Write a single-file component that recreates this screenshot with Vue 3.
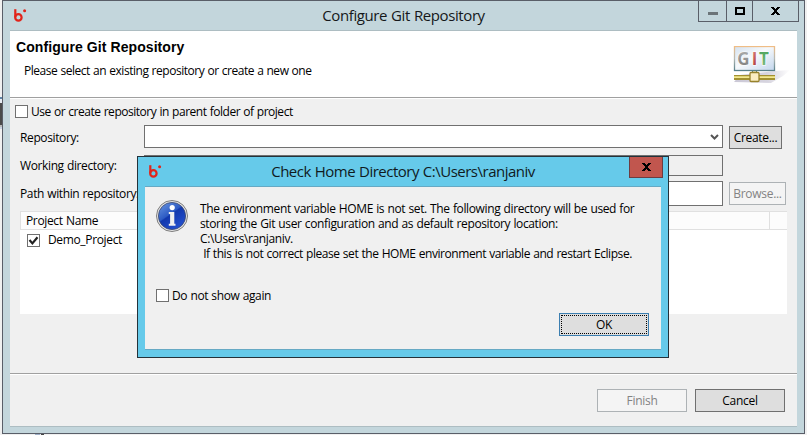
<script setup>
import { ref } from 'vue'

const useParent = ref(false)
const hideNotice = ref(false)
const projects = ref([{ name: 'Demo_Project', checked: true }])
const message = [
  'The environment variable HOME is not set. The following directory will be used for',
  'storing the Git user configuration and as default repository location:',
  'C:\\Users\\ranjaniv.\n',
].join('\n')
const advice = ' If this is not correct please set the HOME environment variable and restart Eclipse.'
</script>

<template>
  <div class="desktop">
    <span class="edge-mark"></span>
    <span class="bottom-mark"></span>
    <section class="window">
      <header class="titlebar">
        <svg class="logo" viewBox="0 0 14 14">
          <path d="M2.3 .2V8.3" />
          <circle cx="5.4" cy="8.4" r="3.2" />
          <circle class="dot" cx="11.6" cy="1.7" r="1.5" />
        </svg>
        <h1>Configure Git Repository</h1>
        <div class="controls">
          <span class="control min"><i></i></span>
          <span class="control max"><i></i></span>
          <span class="control close">
            <svg viewBox="0 0 9 8" shape-rendering="crispEdges"><path d="M0 0h3v1h1v1h1v-1h1v-1h3v1h-1v1h-1v1h-1v2h1v1h1v1h1v1h-3v-1h-1v-1h-1v1h-1v1h-3v-1h1v-1h1v-1h1v-2h-1v-1h-1v-1h-1z" /></svg>
          </span>
        </div>
      </header>

      <div class="client">
        <div class="banner">
          <div>
            <h2>Configure Git Repository</h2>
            <p class="subtitle">Please select an existing repository or create a new one</p>
          </div>
          <svg class="git" viewBox="0 0 60 40">
            <defs>
              <linearGradient id="screen" x1="0" y1="0" x2="1" y2="1">
                <stop offset="0" stop-color="#d5e2f0" />
                <stop offset=".45" stop-color="#f6f9fc" />
                <stop offset="1" stop-color="#c3d6ec" />
              </linearGradient>
              <linearGradient id="frame" x1="0" y1="0" x2="0" y2="1">
                <stop offset="0" stop-color="#f0bd85" />
                <stop offset=".5" stop-color="#b5b9b4" />
                <stop offset="1" stop-color="#58808a" />
              </linearGradient>
              <linearGradient id="shadow">
                <stop offset="0" stop-color="#b9b5c8" />
                <stop offset=".6" stop-color="#c9c6d4" />
                <stop offset="1" stop-color="#fff" />
              </linearGradient>
              <linearGradient id="letterG" x1="0" y1="0" x2="0" y2="1">
                <stop offset="0" stop-color="#b4b4b4" /><stop offset="1" stop-color="#777" />
              </linearGradient>
              <linearGradient id="letterI" x1="0" y1="0" x2="0" y2="1">
                <stop offset="0" stop-color="#d98380" /><stop offset="1" stop-color="#ac3434" />
              </linearGradient>
              <linearGradient id="letterT" x1="0" y1="0" x2="0" y2="1">
                <stop offset="0" stop-color="#45a055" /><stop offset="1" stop-color="#8cc18a" />
              </linearGradient>
            </defs>
            <path d="M2 36L8 29L43 25L58 24L51 30L39 37Z" fill="url(#shadow)" opacity=".75" />
            <rect x="2.5" y=".5" width="40" height="24" fill="url(#screen)" stroke="url(#frame)" stroke-width="1.3" />
            <g class="letters">
              <text x="5.2" y="19.3" fill="url(#letterG)">G</text>
              <text x="19.8" y="19.3" fill="url(#letterI)">I</text>
              <text x="27" y="19.3" fill="url(#letterT)">T</text>
            </g>
            <path d="M20.5 25v3h4v-3" fill="#d9d9b4" stroke="#5f8080" />
            <path d="M2 29h41v5H2z" fill="#a39131" />
            <path d="M2 30.2h41v1.8H2z" fill="#f3e98e" />
            <rect x="18" y="26.5" width="9" height="9" rx="1" fill="#faedc2" stroke="#97822b" stroke-width="1.3" />
          </svg>
        </div>

        <div class="parent-row">
          <span class="checkbox" role="checkbox" :aria-checked="useParent" @click="useParent = !useParent"></span>
          <span class="parent-label">Use or create repository in parent folder of project</span>
        </div>

        <div class="form">
          <label class="name-repo">Repository:</label>
          <div class="field combo">
            <svg viewBox="0 0 9 7"><path d="M1 1L4.5 4.5L8 1" /></svg>
          </div>
          <button class="button create">Create...</button>

          <label class="name-dir">Working directory:</label>
          <div class="field readonly"></div>
          <span></span>

          <label class="name-path">Path within repository:</label>
          <div class="field path"></div>
          <button class="button browse" disabled>Browse...</button>
        </div>

        <div class="table">
          <div class="head"><span class="column">Project Name</span></div>
          <div v-for="project in projects" :key="project.name" class="project">
            <span class="checkbox"><svg v-if="project.checked" viewBox="0 0 11 11"><path d="M1.5 5L4.4 8.4L9.5 2.2" /></svg></span>
            <span class="project-name">{{ project.name }}</span>
          </div>
        </div>

        <footer class="actions">
          <button class="button" disabled>Finish</button>
          <button class="button">Cancel</button>
        </footer>
      </div>
    </section>

    <section class="dialog" role="dialog">
      <header class="dialog-title">
        <svg class="logo" viewBox="0 0 14 14">
          <path d="M2.3 .2V8.3" />
          <circle cx="5.4" cy="8.4" r="3.2" />
          <circle class="dot" cx="11.6" cy="1.7" r="1.5" />
        </svg>
        <h1>Check Home Directory C:\Users\ranjaniv</h1>
        <span class="dialog-close">
          <svg viewBox="0 0 9 8" shape-rendering="crispEdges"><path d="M0 0h3v1h1v1h1v-1h1v-1h3v1h-1v1h-1v1h-1v2h1v1h1v1h1v1h-3v-1h-1v-1h-1v1h-1v1h-3v-1h1v-1h1v-1h1v-2h-1v-1h-1v-1h-1z" /></svg>
        </span>
      </header>
      <div class="dialog-body">
        <div class="message">
          <svg class="info" viewBox="0 0 32 32">
            <defs>
              <linearGradient id="ball" x1="0" y1="0" x2=".7" y2="1">
                <stop offset="0" stop-color="#6d9ae3" />
                <stop offset=".48" stop-color="#2d5bc4" />
                <stop offset=".52" stop-color="#1238ad" />
                <stop offset="1" stop-color="#2450cf" />
              </linearGradient>
            </defs>
            <circle cx="16" cy="16" r="15.5" fill="#e6e6e6" stroke="#7d7d7d" />
            <circle cx="16" cy="16" r="13.6" fill="url(#ball)" stroke="#39466e" stroke-width=".8" />
            <circle cx="16.2" cy="7.6" r="2.6" fill="#fff" />
            <path d="M12.8 12h5.5v11.8h1.2v2h-6.7v-2h1.3v-9.8h-1.3z" fill="#f0f0f0" />
          </svg>
          <p class="lines">{{ message }}<span class="advice">{{ advice }}</span></p>
        </div>
        <div class="again">
          <span class="checkbox" role="checkbox" :aria-checked="hideNotice" @click="hideNotice = !hideNotice"></span>
          <span class="again-label">Do not show again</span>
        </div>
        <div class="confirm"><button class="button ok"><span>OK</span></button></div>
      </div>
    </section>
  </div>
</template>

<style>
html, body { margin: 0; overflow: hidden; }
</style>

<style scoped>
* { box-sizing: border-box; }
h1, h2, p { margin: 0; font-weight: 400; }
svg { display: block; flex: none; }
.desktop {
  position: relative;
  width: 807px;
  height: 435px;
  padding-left: 2px;
  overflow: hidden;
  background: #f0f0f0;
  color: #000;
  font: 12px/16px "Open Sans", "Noto Sans", sans-serif;
  letter-spacing: -0.47px;
  word-spacing: 0.5px;
  white-space: nowrap;
}
.edge-mark {
  position: absolute;
  left: 0;
  top: 97px;
  width: 2px;
  height: 32px;
  border-top: 2px solid #5f83a5;
  border-bottom: 2px solid #cbd5e4;
  background: linear-gradient(#e8edf4 4px, #4b4b4b 4px 26px, #bbb 26px);
}
.bottom-mark {
  position: absolute;
  left: 35px;
  top: 434px;
  width: 9px;
  height: 1px;
  background: linear-gradient(90deg, #9fb0c8 5px, #eee 5px 6px, #444 6px);
}
.window {
  display: flex;
  flex-direction: column;
  width: 803px;
  height: 434px;
  padding: 0 7px 6px;
  border: 1px solid #595e68;
  background: #c3d6dc;
}
.titlebar {
  position: relative;
  display: flex;
  flex: none;
  justify-content: center;
  height: 30px;
  border-bottom: 1px solid #adbdc2;
}
h1 { font-size: 15px; line-height: 20px; }
.titlebar h1 { padding-top: 4px; letter-spacing: -0.4px; color: #15181a; }
.logo { position: absolute; width: 14px; height: 14px; fill: none; stroke: #e2231a; stroke-width: 2.2; }
.logo .dot { fill: #e2231a; stroke: none; }
.titlebar .logo { left: 3px; top: 8px; }
.controls {
  position: absolute;
  right: -2px;
  top: 0;
  display: flex;
  height: 21px;
  border: solid #595e68;
  border-width: 0 1px 1px;
}
.control { display: flex; justify-content: center; }
.control + .control { border-left: 1px solid #595e68; }
.min { width: 27px; padding-top: 11px; }
.min i { width: 10px; height: 3px; background: #6b7478; }
.max { width: 26px; padding-top: 6px; }
.max i { width: 10px; height: 8px; border: 2px solid #000; }
.close { width: 46px; padding-top: 6px; }
.close svg, .dialog-close svg { width: 9px; height: 8px; }
.client { display: flex; flex: 1; flex-direction: column; width: 787px; background: #f0f0f0; border-bottom: 1px solid #adbdc2; }
.banner {
  display: flex;
  flex: none;
  justify-content: space-between;
  height: 67px;
  padding: 8px 5px 0 6px;
  border-bottom: 1px solid #a0a0a0;
  background: #fff;
}
h2 { font: bold 14px/17px "Liberation Sans", sans-serif; letter-spacing: 0.08px; word-spacing: 0; }
.subtitle { padding: 7px 0 0 8px; }
.git { width: 60px; height: 40px; margin-top: 7px; }
.letters { font: bold 17px "Open Sans", sans-serif; letter-spacing: 0; stroke: #fff; stroke-width: 1.2px; paint-order: stroke; }
.parent-row { display: flex; flex: none; gap: 3px; height: 27px; padding: 6px 0 0 5px; border-top: 1px solid #fff; }
.parent-label { margin-top: -1px; }
.checkbox { display: block; flex: none; width: 13px; height: 13px; border: 1px solid #707070; background: #fff; }
.checkbox svg { width: 11px; height: 11px; fill: none; stroke: #212121; stroke-width: 2.2; }
.form { display: grid; flex: none; grid-template: 24px 28px 32px / 118px 579px auto; gap: 0 6px; height: 84px; padding-left: 10px; }
.form label { padding-top: 5px; letter-spacing: -0.38px; }
.form .name-dir, .form .name-path { padding-top: 9px; }
.field { border: 1px solid #707070; background: #fff; }
.combo { display: flex; justify-content: flex-end; height: 23px; padding: 8px 3px 0 0; }
.combo svg { width: 9px; height: 7px; fill: none; stroke: #555; stroke-width: 2; }
.readonly { height: 21px; margin-top: 6px; background: #f0f0f0; }
.path { height: 25px; margin-top: 4px; }
.button {
  width: 90px;
  height: 23px;
  padding: 0;
  border: 1px solid #707070;
  background: #dedede;
  color: #000;
  font: inherit;
  letter-spacing: -0.3px;
  text-align: center;
}
.button:disabled { border-color: #adb2b5; background: #f4f4f4; color: #838383; }
.create { width: 53px; margin-top: 1px; padding-top: 1px; }
.browse { width: 57px; margin-top: 5px; padding-top: 1px; }
.table { flex: none; width: 767px; height: 103px; margin: 2px 0 0 10px; background: #fff; }
.head { height: 19px; border: solid #e0e0e0; border-width: 1px 0 1px 1px; background: #fcfcfc; }
.column { display: block; width: 749px; height: 17px; padding-left: 5px; border-right: 1px solid #e0e0e0; line-height: 17px; letter-spacing: -0.35px; }
.project { display: flex; gap: 8px; height: 22px; padding: 4px 0 0 7px; letter-spacing: -0.35px; }
.project-name { margin-top: -2px; }
.actions {
  display: flex;
  justify-content: flex-end;
  gap: 8px;
  margin-top: auto;
  height: 53px;
  padding: 15px 12px 0 0;
  border-top: 1px solid #a0a0a0;
  box-shadow: inset 0 1px #fff;
}
.dialog {
  position: absolute;
  left: 137px;
  top: 156px;
  width: 532px;
  height: 202px;
  padding: 0 7px 7px;
  border: 1px solid #24323a;
  background: #66caea;
}
.dialog-title { position: relative; display: flex; justify-content: center; height: 30px; border-bottom: 1px solid #66a9c4; }
.dialog-title h1 { padding-top: 4px; letter-spacing: -0.5px; color: #101a1e; }
.dialog-title .logo { left: 3px; top: 8px; }
.dialog-close {
  position: absolute;
  right: -2px;
  top: 0;
  display: flex;
  justify-content: center;
  width: 34px;
  height: 21px;
  padding-top: 6px;
  border: 1px solid #6d3c41;
  border-top: 0;
  background: #c1564e;
}
.dialog-body { height: 163px; padding-left: 11px; border-bottom: 1px solid #66a9c4; background: #f0f0f0; }
.message { display: flex; gap: 12px; height: 102px; padding-top: 13px; }
.info { width: 32px; height: 32px; }
.lines { padding-top: 1px; line-height: 15px; letter-spacing: -0.37px; white-space: pre; }
.advice { letter-spacing: -0.44px; }
.again { display: flex; gap: 3px; height: 24px; letter-spacing: -0.38px; }
.again-label { margin-top: -1px; }
.confirm { display: flex; justify-content: flex-end; padding-right: 12px; }
.ok { padding: 1px; border-color: #3c7fb1; }
.ok span { display: block; height: 19px; border: 1px dotted #000; line-height: 17px; }
</style>
